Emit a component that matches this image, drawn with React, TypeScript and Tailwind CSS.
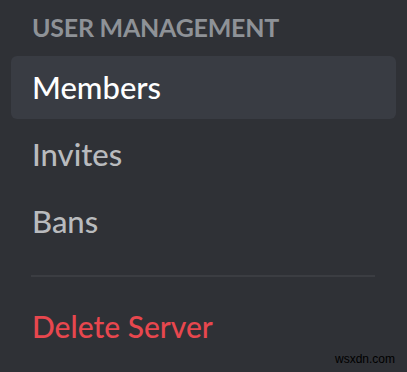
export default function App() {
  const items = ["Members", "Invites", "Bans"];
  return (
    <div className="relative w-[407px] h-[372px] bg-[#2f3136] overflow-hidden" style={{ fontFamily: 'Lato, sans-serif' }}>
      <div className="flex flex-col px-[11px]">
        <div className="h-[54px] mb-[2px] flex items-center pl-[21px] text-[25px] font-bold text-[#8e9297] leading-none tracking-[-0.01em]">
          USER MANAGEMENT
        </div>
        <div className="flex flex-col gap-[4px]">
          {items.map((it, i) => (
            <div
              key={it}
              className={`h-[63px] flex items-center pl-[21px] rounded-[6px] text-[31px] font-medium leading-none ${i === 0 ? "bg-[#393c43] text-white" : "text-[#b9bbbe]"}`}
            >
              {it}
            </div>
          ))}
        </div>
        <div className="mt-[22px] ml-[20px] w-[344px] h-[2px] bg-[#3b3d42]" />
        <div className="mt-[17px] h-[63px] flex items-center pl-[21px] text-[30px] font-medium leading-none text-[#e8474e]">
          Delete Server
        </div>
      </div>
      <div className="absolute right-[12px] bottom-[4px] text-[12px] text-black" style={{ fontFamily: '"Liberation Sans", sans-serif' }}>
        wsxdn.com
      </div>
    </div>
  );
}
